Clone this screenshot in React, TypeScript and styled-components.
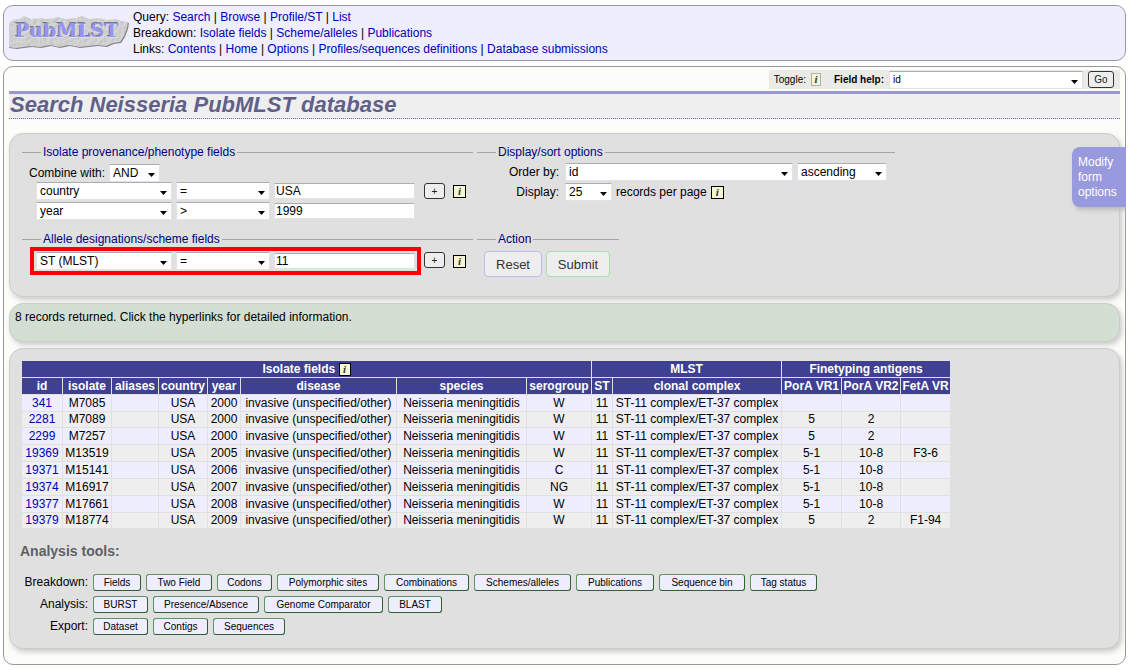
import React from "react";
import styled, { createGlobalStyle } from "styled-components";

const GlobalStyle = createGlobalStyle`
  *, *::before, *::after { box-sizing: border-box; }
  body {
    margin: 5px 3px 6px;
    background: #fff;
    color: #000;
    font: 12px/16px "Liberation Sans", Arial, sans-serif;
  }
  button, input, select { font-family: inherit; margin: 0; }
  a { color: #0000b8; text-decoration: none; }
`;

const Header = styled.header`
  display: flex;
  align-items: flex-start;
  gap: 4px;
  padding: 3px 5px;
  background: #eef;
  border: 1px solid #999;
  border-radius: 10px;
`;

const Logo = styled.svg`
  width: 120px;
  height: 38px;
  margin-top: 3px;
  flex: none;
`;

const NavLine = styled.div`
  line-height: 16px;
`;

const Main = styled.main`
  margin-top: 5px;
  padding: 3px 5px 15px;
  background: #fcfdf8;
  border: 1px solid #999;
  border-radius: 10px;
`;

const Toolbar = styled.form`
  display: flex;
  align-items: center;
  width: fit-content;
  height: 19px;
  margin-left: auto;
  padding: 0 6px 0 5px;
  gap: 5px;
  background: #eaebe6;
  font-size: 10px;
`;

const HelpLabel = styled.label`
  margin-left: 8px;
  font-weight: bold;
`;

const Title = styled.h1`
  height: 28px;
  margin: 2px 0 14px;
  padding-left: 1px;
  border-top: 3px solid #99c;
  border-bottom: 1px dotted #6666b8;
  background: #efefef;
  color: #606088;
  font-size: 22px;
  line-height: 22px;
  font-style: italic;
`;

const Panel = styled.section<{ $tone?: string }>`
  position: relative;
  margin-bottom: 6px;
  background: ${(p) => p.$tone || "#e0e0e0"};
  border: 1px solid #ccc;
  border-radius: 14px;
  box-shadow: 2px 3px 5px #ccc;
`;

const FormPanel = styled(Panel)`
  display: grid;
  grid-template-columns: 451px 418px;
  column-gap: 4px;
  row-gap: 10px;
  align-items: start;
  padding: 10px 12px 19px;
`;

const Message = styled(Panel)`
  padding: 5px 5px 16px;
`;

const Results = styled(Panel)`
  margin-bottom: 0;
  padding: 11px 11px 11px;
`;

const Group = styled.fieldset<{ $width?: number }>`
  min-width: 0;
  width: ${(p) => (p.$width ? `${p.$width}px` : "auto")};
  margin: 0;
  padding: 0 0 0 7px;
  border: 0;
  border-top: 1px solid #a6a6a6;
`;

const Legend = styled.legend`
  margin-left: 12px;
  padding: 0 2px;
  color: #000080;
`;

const Row = styled.div<{ $indent?: number }>`
  display: flex;
  align-items: center;
  gap: 4px;
  height: 20px;
  padding-left: ${(p) => p.$indent || 0}px;
`;

const CombineRow = styled(Row)`
  height: 17px;
  margin-top: 4px;
`;

const DisplayRows = styled.div`
  margin-top: 2px;
`;

const OptionLabel = styled.label`
  width: 75px;
  margin-right: 2px;
  text-align: right;
`;

const Select = styled.select<{ $width: number; $small?: boolean }>`
  appearance: none;
  width: ${(p) => p.$width}px;
  height: 18px;
  padding: 0 14px 0 3px;
  border: 1px solid #e2e3ea;
  border-top-color: #abadb3;
  border-radius: 1px;
  background: #fff
    url("data:image/svg+xml,%3Csvg xmlns='http://www.w3.org/2000/svg' width='7' height='4'%3E%3Cpath d='M0 0h7L3.500 4z'/%3E%3C/svg%3E")
    no-repeat right 4px top 8px;
  color: #000;
  font-size: ${(p) => (p.$small ? 10 : 12)}px;
  line-height: 16px;
`;

const TextBox = styled.input`
  width: 141px;
  height: 16px;
  padding: 0 1px;
  border: 1px solid #e2e3ea;
  border-top-color: #abadb3;
  background: #fff;
  color: #000;
  font-size: 12px;
`;

const SmallButton = styled.button<{ $width: number }>`
  width: ${(p) => p.$width}px;
  height: 17px;
  padding: 0;
  border: 1px solid #333;
  border-radius: 3px;
  background: #eee;
  color: #222;
  font-size: 10px;
  line-height: 13px;
`;

const AddButton = styled(SmallButton)`
  margin: 0 4px 0 5px;
  height: 16px;
`;

const InfoLink = styled.a<{ $muted?: boolean }>`
  display: inline-block;
  width: 13px;
  height: 13px;
  border: 1px solid ${(p) => (p.$muted ? "#b0b0b0" : "#000")};
  background: #f6f6d0;
  color: #333;
  font: italic bold 11px/11px "Liberation Serif", serif;
  text-align: center;
`;

const ToggleLink = styled(InfoLink)`
  width: 10px;
`;

const HeadInfo = styled(InfoLink)`
  width: 12px;
  vertical-align: top;
  margin-top: 2px;
`;

const Highlight = styled.div`
  width: 391px;
  height: 28px;
  margin: 0 -1px 0 0;
  padding: 0 2px;
  border: 4px solid #f00;
  display: flex;
  align-items: center;
  gap: 4px;
`;

const AlleleRow = styled.div`
  display: flex;
  align-items: center;
  padding-left: 1px;
`;

const AlleleAdd = styled(AddButton)`
  margin: 0 8px 2px 4px;
`;

const Actions = styled.div`
  display: flex;
  gap: 4px;
  margin-top: 4px;
`;

const ActionButton = styled.button<{ $edge: string; $width: number }>`
  width: ${(p) => p.$width}px;
  height: 26px;
  padding: 0;
  border: 1px solid ${(p) => p.$edge};
  border-radius: 4px;
  background: #eee;
  color: #333;
  font-size: 13px;
`;

const ModifyTab = styled.button`
  position: absolute;
  top: 13px;
  right: -7px;
  width: 54px;
  height: 60px;
  padding: 0 6px;
  border: 0;
  border-radius: 8px 0 0 8px;
  background: #99d;
  box-shadow: 2px 3px 4px #bbb;
  color: #fff;
  font-size: 12px;
  line-height: 15px;
  text-align: left;
`;

const Table = styled.table`
  table-layout: fixed;
  width: 930px;
  border-spacing: 1px;
  text-align: center;
  white-space: nowrap;

  th, td { padding: 0; line-height: 16px; }
  th { background: #404090; color: #fff; }
  tbody tr { background: #eef; }
  tbody tr:nth-child(even) { background: #eee; }
  tbody tr:nth-child(6n + 2) td { line-height: 15px; }
`;

const ToolsTitle = styled.h2`
  margin: 14px 0 12px -1px;
  color: #606060;
  font-size: 14px;
  line-height: 16px;
`;

const ToolRow = styled.div`
  display: flex;
  align-items: center;
  gap: 5px;
  height: 22px;
`;

const ToolLabel = styled.span`
  width: 67px;
  text-align: right;
`;

const ToolButton = styled(SmallButton)`
  border-color: #5c9560 #2f6032 #2f6032 #5c9560;
  background: #eef;
  color: #000;
`;

const nav = [
  { label: "Query", links: ["Search", "Browse", "Profile/ST", "List"] },
  { label: "Breakdown", links: ["Isolate fields", "Scheme/alleles", "Publications"] },
  {
    label: "Links",
    links: ["Contents", "Home", "Options", "Profiles/sequences definitions", "Database submissions"],
  },
];

const columnWidths = [40, 48, 46, 48, 32, 155, 129, 64, 20, 168, 59, 58, 49];
const columnNames = [
  "id", "isolate", "aliases", "country", "year", "disease", "species", "serogroup",
  "ST", "clonal complex", "PorA VR1", "PorA VR2", "FetA VR",
];

const isolates = [
  ["341", "M7085", "2000", "W", "", "", ""],
  ["2281", "M7089", "2000", "W", "5", "2", ""],
  ["2299", "M7257", "2000", "W", "5", "2", ""],
  ["19369", "M13519", "2005", "W", "5-1", "10-8", "F3-6"],
  ["19371", "M15141", "2006", "C", "5-1", "10-8", ""],
  ["19374", "M16917", "2007", "NG", "5-1", "10-8", ""],
  ["19377", "M17661", "2008", "W", "5-1", "10-8", ""],
  ["19379", "M18774", "2009", "W", "5", "2", "F1-94"],
];

const tools: { label: string; buttons: [string, number][] }[] = [
  {
    label: "Breakdown",
    buttons: [
      ["Fields", 48], ["Two Field", 66], ["Codons", 55], ["Polymorphic sites", 102],
      ["Combinations", 85], ["Schemes/alleles", 97], ["Publications", 78],
      ["Sequence bin", 86], ["Tag status", 67],
    ],
  },
  {
    label: "Analysis",
    buttons: [["BURST", 55], ["Presence/Absence", 106], ["Genome Comparator", 119], ["BLAST", 54]],
  },
  { label: "Export", buttons: [["Dataset", 55], ["Contigs", 55], ["Sequences", 72]] },
];

function Picker(props: { name: string; value: string; width: number; small?: boolean; id?: string }) {
  return (
    <Select id={props.id} aria-label={props.name} $width={props.width} $small={props.small} defaultValue={props.value}>
      <option>{props.value}</option>
    </Select>
  );
}

const stoneOutline =
  "M4 8l6-1 5-3 7 3 9-1 8 1 10-2 7 2 11-1 6-2 7 3 10-1 8 2 9-1 6 2 6 1-1 6-3 8-4 6-7 1-7 3-9-1-9 1-9 1-10-2-10 2-9-2-10 2-9-1-8 1-7 1-9-1-5-1-3-5 1-5-2-6z";

function StoneLogo() {
  return (
    <Logo viewBox="0 0 120 38" role="img" aria-label="PubMLST">
      <defs>
        <filter id="stone" x="-5%" y="-10%" width="110%" height="120%">
          <feTurbulence type="fractalNoise" baseFrequency="0.3" numOctaves="3" seed="4" result="noise" />
          <feDiffuseLighting in="noise" surfaceScale="0.7" lightingColor="#dadada" result="light">
            <feDistantLight azimuth="225" elevation="64" />
          </feDiffuseLighting>
          <feComposite in="light" in2="SourceGraphic" operator="in" />
        </filter>
      </defs>
      <path transform="translate(1 1)" fill="#858585" d={stoneOutline} />
      <path filter="url(#stone)" fill="#c4c4c4" d={stoneOutline} />
      <g fontFamily="DejaVu Serif, serif" fontWeight="bold" fontSize="19">
        <text x="5" y="24" fill="#77778c">PubMLST</text>
        <text x="7" y="26" fill="#e0e0ec">PubMLST</text>
        <text x="6" y="25" fill="#9696ee">PubMLST</text>
      </g>
    </Logo>
  );
}

export default function App() {
  return (
    <>
      <GlobalStyle />
      <Header>
        <StoneLogo />
        <nav>
          {nav.map((line) => (
            <NavLine key={line.label}>
              {line.label}:{" "}
              {line.links.map((text, i) => (
                <React.Fragment key={text}>
                  {i > 0 && " | "}
                  <a href="#">{text}</a>
                </React.Fragment>
              ))}
            </NavLine>
          ))}
        </nav>
      </Header>
      <Main>
        <Toolbar>
          <span>Toggle:</span>
          <ToggleLink href="#" $muted>i</ToggleLink>
          <HelpLabel htmlFor="field-help">Field help:</HelpLabel>
          <Picker id="field-help" name="Field help" value="id" width={194} small />
          <SmallButton type="button" $width={26}>Go</SmallButton>
        </Toolbar>
        <Title>Search Neisseria PubMLST database</Title>

        <FormPanel>
          <Group>
            <Legend>Isolate provenance/phenotype fields</Legend>
            <CombineRow>
              <label htmlFor="combine">Combine with:</label>
              <Picker id="combine" name="Combine with" value="AND" width={51} />
            </CombineRow>
            <Row $indent={7}>
              <Picker name="First field" value="country" width={136} />
              <Picker name="First operator" value="=" width={94} />
              <TextBox aria-label="First value" defaultValue="USA" />
              <AddButton type="button" $width={21}>+</AddButton>
              <InfoLink href="#">i</InfoLink>
            </Row>
            <Row $indent={7}>
              <Picker name="Second field" value="year" width={136} />
              <Picker name="Second operator" value=">" width={94} />
              <TextBox aria-label="Second value" defaultValue="1999" />
            </Row>
          </Group>
          <Group>
            <Legend>Display/sort options</Legend>
            <DisplayRows>
              <Row>
                <OptionLabel htmlFor="order">Order by:</OptionLabel>
                <Picker id="order" name="Order by" value="id" width={228} />
                <Picker name="Direction" value="ascending" width={90} />
              </Row>
              <Row>
                <OptionLabel htmlFor="display">Display:</OptionLabel>
                <Picker id="display" name="Display" value="25" width={47} />
                <span>records per page</span>
                <InfoLink href="#">i</InfoLink>
              </Row>
            </DisplayRows>
          </Group>
          <Group>
            <Legend>Allele designations/scheme fields</Legend>
            <AlleleRow>
              <Highlight>
                <Picker name="Locus" value="ST (MLST)" width={136} />
                <Picker name="Locus operator" value="=" width={94} />
                <TextBox aria-label="Allele" defaultValue="11" />
              </Highlight>
              <AlleleAdd type="button" $width={21}>+</AlleleAdd>
              <InfoLink href="#">i</InfoLink>
            </AlleleRow>
          </Group>
          <Group $width={142}>
            <Legend>Action</Legend>
            <Actions>
              <ActionButton type="reset" $edge="#bbe" $width={58}>Reset</ActionButton>
              <ActionButton type="button" $edge="#ada" $width={64}>Submit</ActionButton>
            </Actions>
          </Group>
          <ModifyTab type="button">Modify form options</ModifyTab>
        </FormPanel>

        <Message $tone="#d3dfd3">8 records returned. Click the hyperlinks for detailed information.</Message>

        <Results>
          <Table>
            <colgroup>
              {columnWidths.map((w, i) => (
                <col key={i} width={w} />
              ))}
            </colgroup>
            <thead>
              <tr>
                <th colSpan={8}>Isolate fields <HeadInfo href="#">i</HeadInfo></th>
                <th colSpan={2}>MLST</th>
                <th colSpan={3}>Finetyping antigens</th>
              </tr>
              <tr>
                {columnNames.map((name) => (
                  <th key={name}>{name}</th>
                ))}
              </tr>
            </thead>
            <tbody>
              {isolates.map(([id, isolate, year, group, vr1, vr2, fet]) => (
                <tr key={id}>
                  <td><a href="#">{id}</a></td>
                  <td>{isolate}</td>
                  <td />
                  <td>USA</td>
                  <td>{year}</td>
                  <td>invasive (unspecified/other)</td>
                  <td>Neisseria meningitidis</td>
                  <td>{group}</td>
                  <td>11</td>
                  <td>ST-11 complex/ET-37 complex</td>
                  <td>{vr1}</td>
                  <td>{vr2}</td>
                  <td>{fet}</td>
                </tr>
              ))}
            </tbody>
          </Table>
          <ToolsTitle>Analysis tools:</ToolsTitle>
          {tools.map((row) => (
            <ToolRow key={row.label}>
              <ToolLabel>{row.label}:</ToolLabel>
              {row.buttons.map(([text, width]) => (
                <ToolButton key={text} type="button" $width={width}>{text}</ToolButton>
              ))}
            </ToolRow>
          ))}
        </Results>
      </Main>
    </>
  );
}
